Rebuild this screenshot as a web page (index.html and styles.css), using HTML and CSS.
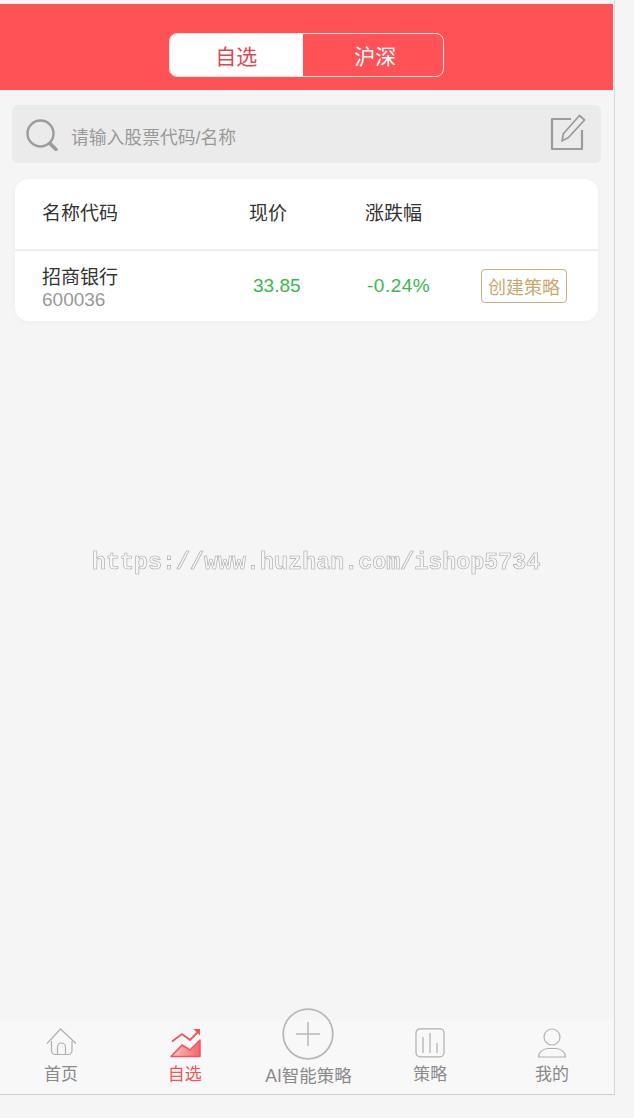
FILE: index.html
```html
<!DOCTYPE html>
<html>
  <head>
    <meta charset="utf-8">
    <link rel="stylesheet" href="styles.css">
  </head>
  <body>
    <div id="app">
      <div class="header">
        <div class="switch">
          <div class="switch-item active">自选</div>
          <div class="switch-item">沪深</div>
        </div>
      </div>
      <div class="search">
        <svg class="search-icon" viewBox="0 0 32 32" fill="none" stroke="#9c9c9c">
          <circle cx="14.5" cy="14.5" r="13" stroke-width="2.4"/>
          <path d="M24 24.5l6 6" stroke-width="3.6" stroke-linecap="round"/>
        </svg>
        <div class="search-text">请输入股票代码/名称</div>
        <svg class="edit-icon" viewBox="0 0 36 38" fill="none" stroke="#9c9c9c" stroke-width="2.2">
          <path d="M21 6H2v30h30V17" stroke-linejoin="round"/>
          <path d="M12 28l1.500-7.500L29.500 2.500l5 4.500-16 17.500z" stroke-width="1.800" stroke-linejoin="round"/>
        </svg>
      </div>
      <div class="card">
        <div class="row row-head">
          <div>名称代码</div>
          <div>现价</div>
          <div>涨跌幅</div>
        </div>
        <div class="row row-item">
          <div class="stock">
            <div class="stock-name">招商银行</div>
            <div class="stock-code">600036</div>
          </div>
          <div class="num num-price">33.85</div>
          <div class="num num-rate">-0.24%</div>
          <div class="btn">创建策略</div>
        </div>
      </div>
      <div class="spacer"></div>
      <div class="tabbar">
        <div class="tab">
          <svg class="tab-icon" viewBox="0 0 32 30" fill="none" stroke="#b0b0b0" stroke-width="1.200">
            <path d="M2 15.500L15.500 1 31 15.500" stroke-linejoin="round"/>
            <path d="M6.500 13v9.500a4 4 0 0 0 4 4H23a4 4 0 0 0 4-4V13"/>
            <path d="M12.500 26.500V19a4 4 0 0 1 8 0v7.500"/>
          </svg>
          <div>首页</div>
        </div>
        <div class="tab tab-active">
          <svg class="tab-icon" viewBox="0 0 32 30">
            <defs>
              <linearGradient id="zig" x1="0" y1="0" x2="1" y2="0">
                <stop offset="0" stop-color="#fbc4c5"/>
                <stop offset="1" stop-color="#f4666b"/>
              </linearGradient>
            </defs>
            <path d="M1 28.500L12 17l8 5 10-10v16.500z" fill="url(#zig)" stroke="#f0555b" stroke-width="1.500" stroke-linejoin="round"/>
            <path d="M2 13.500L12 6l8 6 8-8" fill="none" stroke="#f0555b" stroke-width="1.800"/>
            <path d="M23.500 1H30v6.500z" fill="#f0555b"/>
          </svg>
          <div>自选</div>
        </div>
        <div class="tab tab-add">
          <svg class="add-icon" viewBox="0 0 52 52" fill="none" stroke="#b8b8b8">
            <circle cx="26" cy="26" r="24.800" stroke-width="1.800"/>
            <path d="M26 14v24M14 26h24" stroke-width="1.500"/>
          </svg>
          <div>AI智能策略</div>
        </div>
        <div class="tab">
          <svg class="tab-icon" viewBox="0 0 32 30" fill="none" stroke="#b0b0b0" stroke-width="1.200">
            <rect x="2" y=".8" width="28" height="28" rx="4"/>
            <path d="M9 9v16M16 5v20M23 15v10"/>
          </svg>
          <div>策略</div>
        </div>
        <div class="tab">
          <svg class="tab-icon" viewBox="0 0 32 30" fill="none" stroke="#b0b0b0" stroke-width="1.200">
            <circle cx="16" cy="9" r="8"/>
            <path d="M2.500 29c0-5 5.500-8.500 9-8.500h9c3.500 0 9 3.500 9 8.500z" stroke-linejoin="round"/>
          </svg>
          <div>我的</div>
        </div>
      </div>
      <div class="watermark">https://www.huzhan.com/ishop5734</div>
    </div>
  </body>
</html>
```

FILE: styles.css
```css
html, body {
  margin: 0;
  height: 100%;
}

body {
  background: #f5f5f5;
  font-family: "Liberation Sans", "Noto Sans CJK SC", sans-serif;
  color: #333;
  overflow: hidden;
}

#app {
  position: relative;
  box-sizing: border-box;
  width: 615px;
  height: 1095px;
  padding-top: 4px;
  border-right: 1px solid #d8d8d8;
  border-bottom: 1px solid #d0d0d0;
  display: flex;
  flex-direction: column;
  padding-right: 1px;
}

.header {
  height: 86px;
  background: #ff5257;
  display: flex;
  justify-content: center;
  align-items: flex-end;
  padding-bottom: 13px;
  box-sizing: border-box;
}

.switch {
  width: 275px;
  height: 44px;
  margin-left: -1px;
  box-sizing: border-box;
  border: 1.5px solid #ffe4e5;
  border-radius: 8px;
  display: flex;
  overflow: hidden;
  color: #fff;
  font-size: 21px;
}

.switch-item {
  flex: 1;
  padding-left: 5px;
  display: flex;
  justify-content: center;
  align-items: center;
}

.switch-item.active {
  flex: none;
  width: 133.5px;
  padding-left: 0;
  background: #fff;
  color: #e2474f;
}

.search {
  margin: 15px 12px 0;
  height: 58px;
  border-radius: 6px;
  background: #ebebeb;
  display: flex;
  align-items: center;
  padding: 0 15px 0 14px;
}

.search-icon {
  width: 32px;
  height: 32px;
  margin-top: 1px;
  flex: none;
}

.search-text {
  flex: 1;
  margin-left: 13px;
  padding-top: 3px;
  font-size: 17.800px;
  color: #999;
}

.edit-icon {
  width: 36px;
  height: 38px;
  margin-top: -4px;
  flex: none;
}

.card {
  margin: 16px 15px 0;
  height: 142px;
  background: #fff;
  border-radius: 14px;
  box-shadow: 0 1px 6px rgba(0, 0, 0, .03);
}

.row {
  display: grid;
  grid-template-columns: 207px 116px 116px 1fr;
  padding-left: 27px;
  align-items: center;
}

.row-head {
  height: 72px;
  padding-bottom: 5px;
  box-sizing: border-box;
  border-bottom: 2px solid #eee;
  font-size: 19px;
  color: #333;
}

.row-item {
  height: 70px;
}

.stock-name {
  font-size: 19px;
  line-height: 23px;
  margin-top: 4px;
}

.stock-code {
  font-size: 19px;
  line-height: 22px;
  color: #999;
}

.num {
  font-size: 19px;
  color: #3cb64f;
  margin-left: 4px;
}

.num-rate {
  margin-left: 2px;
  letter-spacing: .5px;
}

.btn {
  justify-self: start;
  box-sizing: border-box;
  width: 86px;
  height: 34px;
  border: 1.5px solid #cbb083;
  border-radius: 4px;
  color: #c9a96f;
  font-size: 18px;
  display: flex;
  align-items: center;
  justify-content: center;
}

.spacer {
  flex: 1;
}

.tabbar {
  height: 74px;
  background: #f8f8f8;
  display: flex;
  font-size: 17px;
  color: #8a8a8a;
}

.tab {
  flex: 1;
  display: flex;
  flex-direction: column;
  align-items: center;
  justify-content: flex-end;
  padding-bottom: 9px;
  box-sizing: border-box;
  line-height: 20px;
}

.tab-icon {
  width: 32px;
  height: 30px;
  margin-bottom: 7px;
}

.tab-active {
  padding-left: 2px;
  color: #f0555b;
}

.tab-active .tab-icon {
  margin-left: 2px;
}

.tab-add {
  margin-top: -12px;
  padding-bottom: 8px;
  padding-left: 2px;
  font-size: 17.500px;
}

.add-icon {
  width: 52px;
  height: 52px;
  margin-bottom: 6px;
}

.watermark {
  position: absolute;
  left: 92px;
  top: 549px;
  font-family: "Liberation Mono", monospace;
  font-weight: bold;
  font-size: 23.350px;
  line-height: 28px;
  white-space: nowrap;
  color: #f7f7f7;
  -webkit-text-stroke: .6px #a8a8a8;
  opacity: .99;
  will-change: transform;
}
```
